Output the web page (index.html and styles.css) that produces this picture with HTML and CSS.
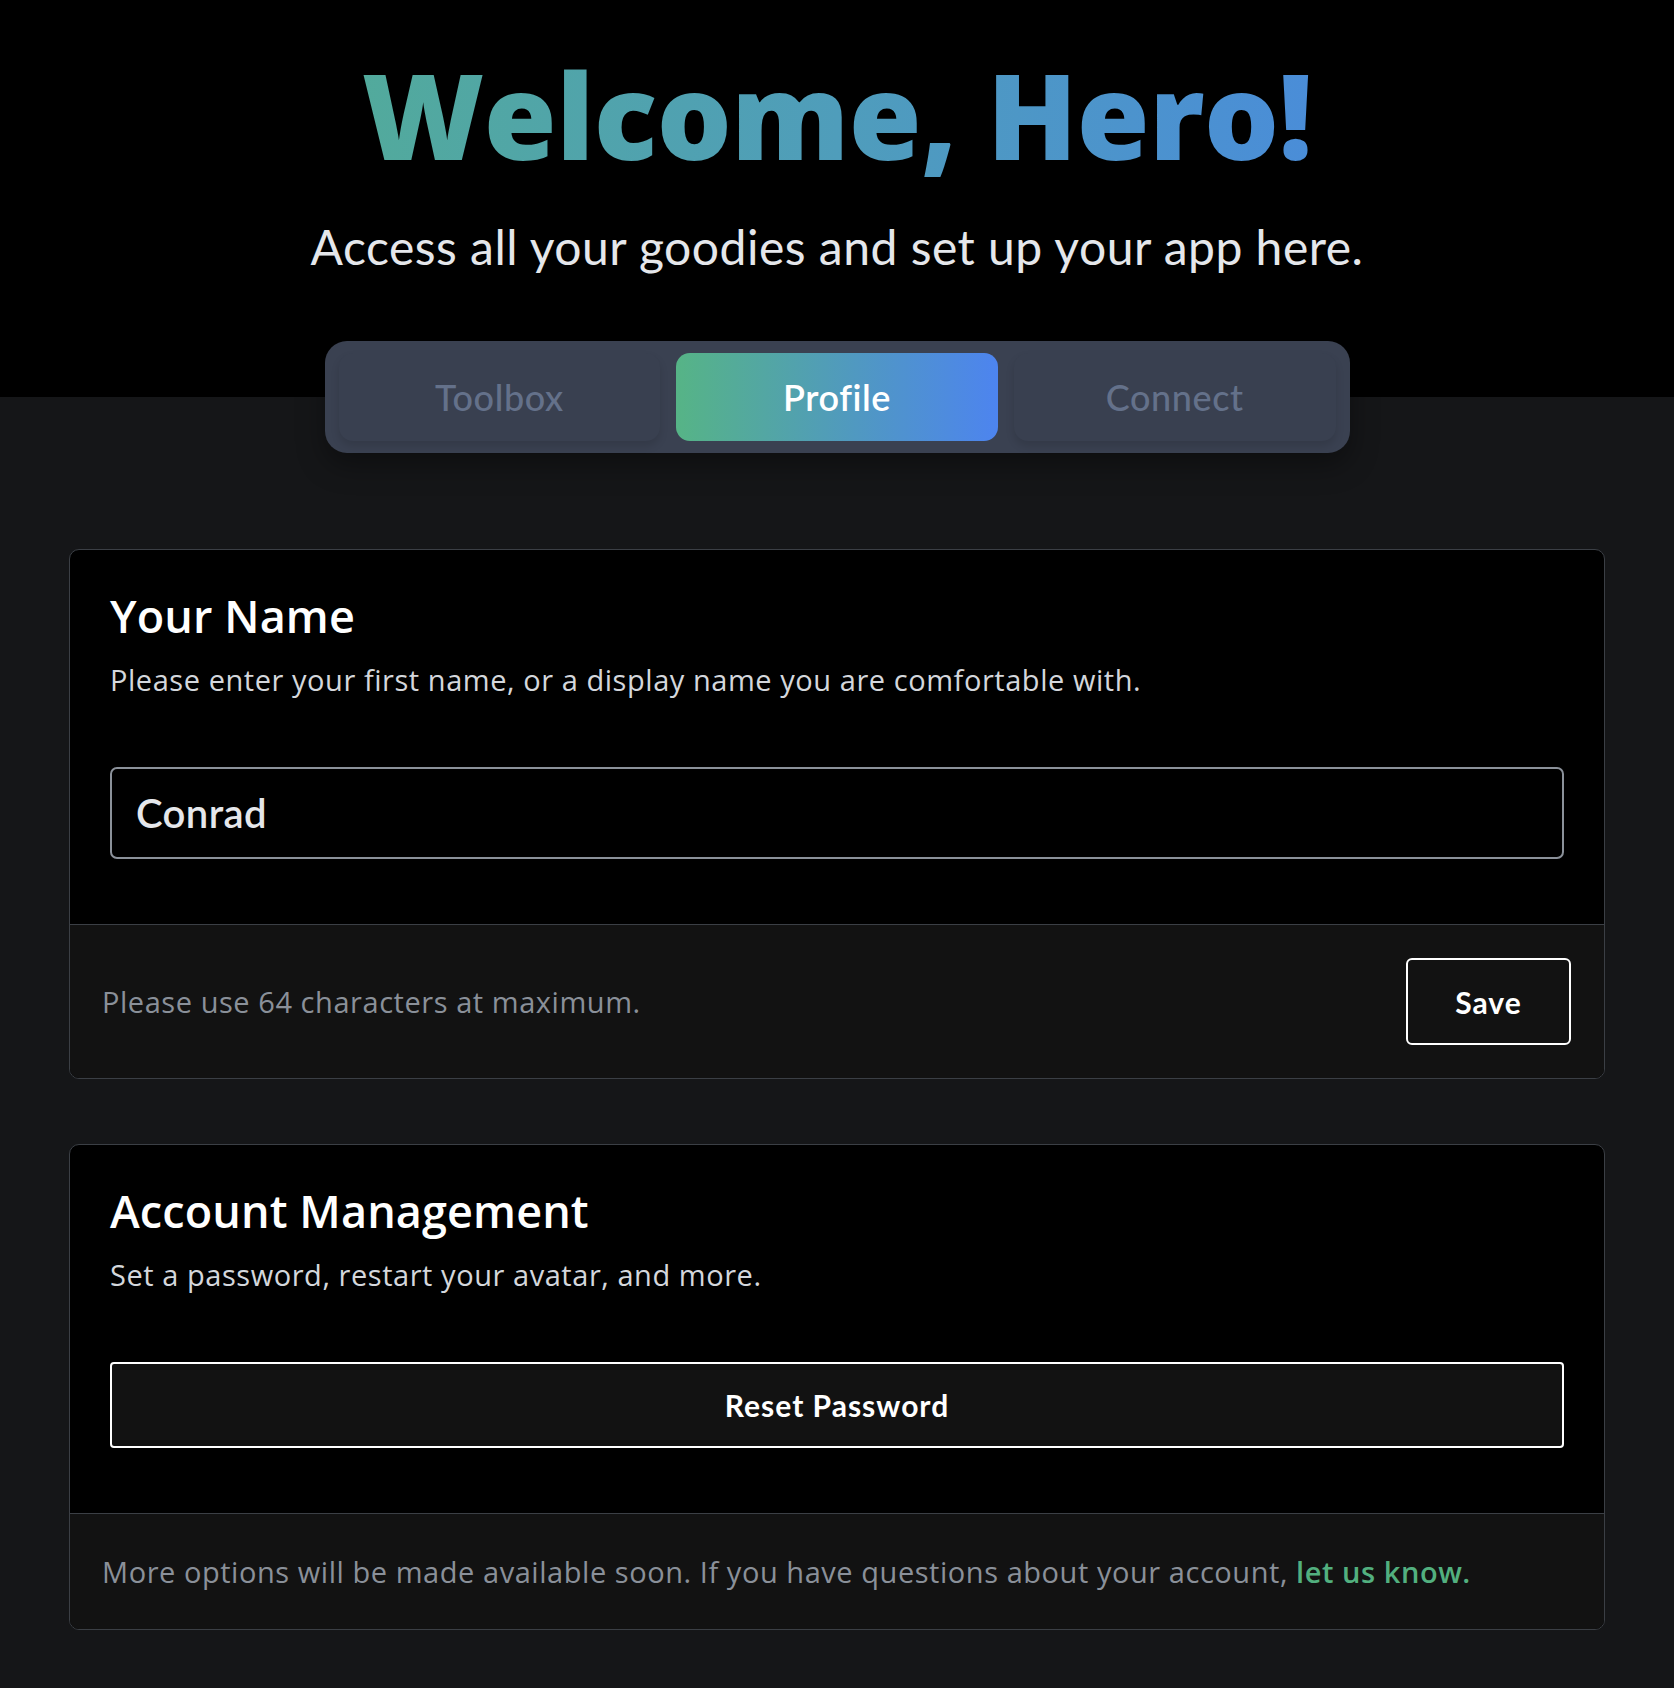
FILE: index.html
```html
<!DOCTYPE html>
<html lang="en">
<head>
<meta charset="utf-8">
<title>Welcome, Hero!</title>
<link rel="stylesheet" href="styles.css">
</head>
<body>
  <header class="hero">
    <h1 class="title"><span class="title-text">Welcome, Hero!</span></h1>
    <p class="subtitle">Access all your goodies and set up your app here.</p>
    <nav class="tabs">
      <button class="tab">Toolbox</button>
      <button class="tab tab-active">Profile</button>
      <button class="tab">Connect</button>
    </nav>
  </header>

  <main class="content">
    <section class="card">
      <div class="card-body">
        <h2 class="card-title">Your Name</h2>
        <p class="card-desc">Please enter your first name, or a display name you are comfortable with.</p>
        <input class="text-input" type="text" value="Conrad">
      </div>
      <div class="card-footer">
        <p class="footer-text">Please use 64 characters at maximum.</p>
        <button class="btn btn-save">Save</button>
      </div>
    </section>

    <section class="card">
      <div class="card-body">
        <h2 class="card-title">Account Management</h2>
        <p class="card-desc">Set a password, restart your avatar, and more.</p>
        <button class="btn btn-wide">Reset Password</button>
      </div>
      <div class="card-footer">
        <p class="footer-text">More options will be made available soon. If you have questions about your account, <a class="link" href="#">let us know.</a></p>
      </div>
    </section>
  </main>
</body>
</html>
```

FILE: styles.css
```css
* {
  box-sizing: border-box;
}

html, body {
  margin: 0;
  padding: 0;
}

body {
  min-height: 1688px;
  background: linear-gradient(to bottom, #000 0, #000 397px, #151618 397px, #151618 100%);
  font-family: "Lato", "Noto Sans", "Liberation Sans", sans-serif;
  color: #e5e7eb;
}

.hero {
  display: flex;
  flex-direction: column;
  align-items: center;
  padding-top: 44px;
}

.title {
  margin: 0;
  font-family: "Open Sans", "Noto Sans", sans-serif;
  font-size: 118px;
  line-height: 1.2;
  font-weight: 800;
  letter-spacing: -0.6px;
  text-align: center;
}

.title-text {
  display: inline-block;
  background: linear-gradient(90deg, #52aa9c 0%, #4f9dbb 50%, #4a8dd8 100%);
  -webkit-background-clip: text;
  background-clip: text;
  color: transparent;
}

.subtitle {
  margin: 32px 0 0;
  font-size: 48px;
  line-height: 1.2;
  font-weight: 400;
  letter-spacing: 0.5px;
  color: #e5e7eb;
}

.tabs {
  margin-top: 66px;
  width: 1025px;
  display: flex;
  gap: 16px;
  padding: 12px 14px;
  background: #3a4151;
  border-radius: 22px;
  box-shadow: 0 12px 28px rgba(0, 0, 0, 0.35);
}

.tab {
  flex: 1;
  height: 88px;
  border: none;
  border-radius: 14px;
  background: #394050;
  box-shadow: 0 5px 8px rgba(0, 0, 0, 0.12);
  font-family: inherit;
  font-size: 36px;
  font-weight: 500;
  letter-spacing: 0.6px;
  color: #64718a;
  cursor: pointer;
}

.tab-active {
  background: linear-gradient(90deg, #56b486 0%, #5099c0 55%, #4d84ef 100%);
  color: #ffffff;
  font-weight: 600;
  box-shadow: none;
}

.content {
  display: flex;
  flex-direction: column;
  gap: 65px;
  margin: 96px 69px 0;
  padding-bottom: 54px;
}

.card {
  border: 1px solid #3b3f45;
  border-radius: 10px;
  background: #000;
  overflow: hidden;
}

.card-body {
  display: flex;
  flex-direction: column;
  padding: 38px 40px 65px;
}

.card-title {
  margin: 0;
  font-family: "Open Sans", "Noto Sans", sans-serif;
  font-size: 45px;
  line-height: 55px;
  font-weight: 600;
  letter-spacing: 0.1px;
  color: #ffffff;
}

.card-desc {
  margin: 16px 0 66px;
  font-family: "Open Sans", "Noto Sans", sans-serif;
  font-size: 29px;
  line-height: 42px;
  letter-spacing: 0.55px;
  color: #d4d7dc;
}

.text-input {
  height: 92px;
  width: 100%;
  padding: 0 24px;
  background: #000;
  border: 2px solid #8b919a;
  border-radius: 7px;
  font-family: inherit;
  font-size: 40px;
  font-weight: 600;
  letter-spacing: 0.4px;
  color: #e5e7eb;
  outline: none;
}

.card-footer {
  display: flex;
  align-items: center;
  justify-content: space-between;
  padding: 33px 33px 33px 32px;
  background: #121212;
  border-top: 1px solid #3b3f45;
}

.footer-text {
  margin: 0;
  font-family: "Open Sans", "Noto Sans", sans-serif;
  font-size: 29px;
  line-height: 49px;
  letter-spacing: 0.55px;
  color: #8a9099;
}

.link {
  color: #52b07f;
  font-weight: 600;
  text-decoration: none;
}

.btn {
  height: 87px;
  background: #121212;
  border: 2px solid #ffffff;
  border-radius: 6px;
  font-family: inherit;
  font-size: 30px;
  font-weight: 700;
  letter-spacing: 1px;
  color: #ffffff;
  cursor: pointer;
}

.btn-save {
  width: 165px;
}

.btn-wide {
  width: 100%;
  height: 86px;
  border-radius: 4px;
}
```
